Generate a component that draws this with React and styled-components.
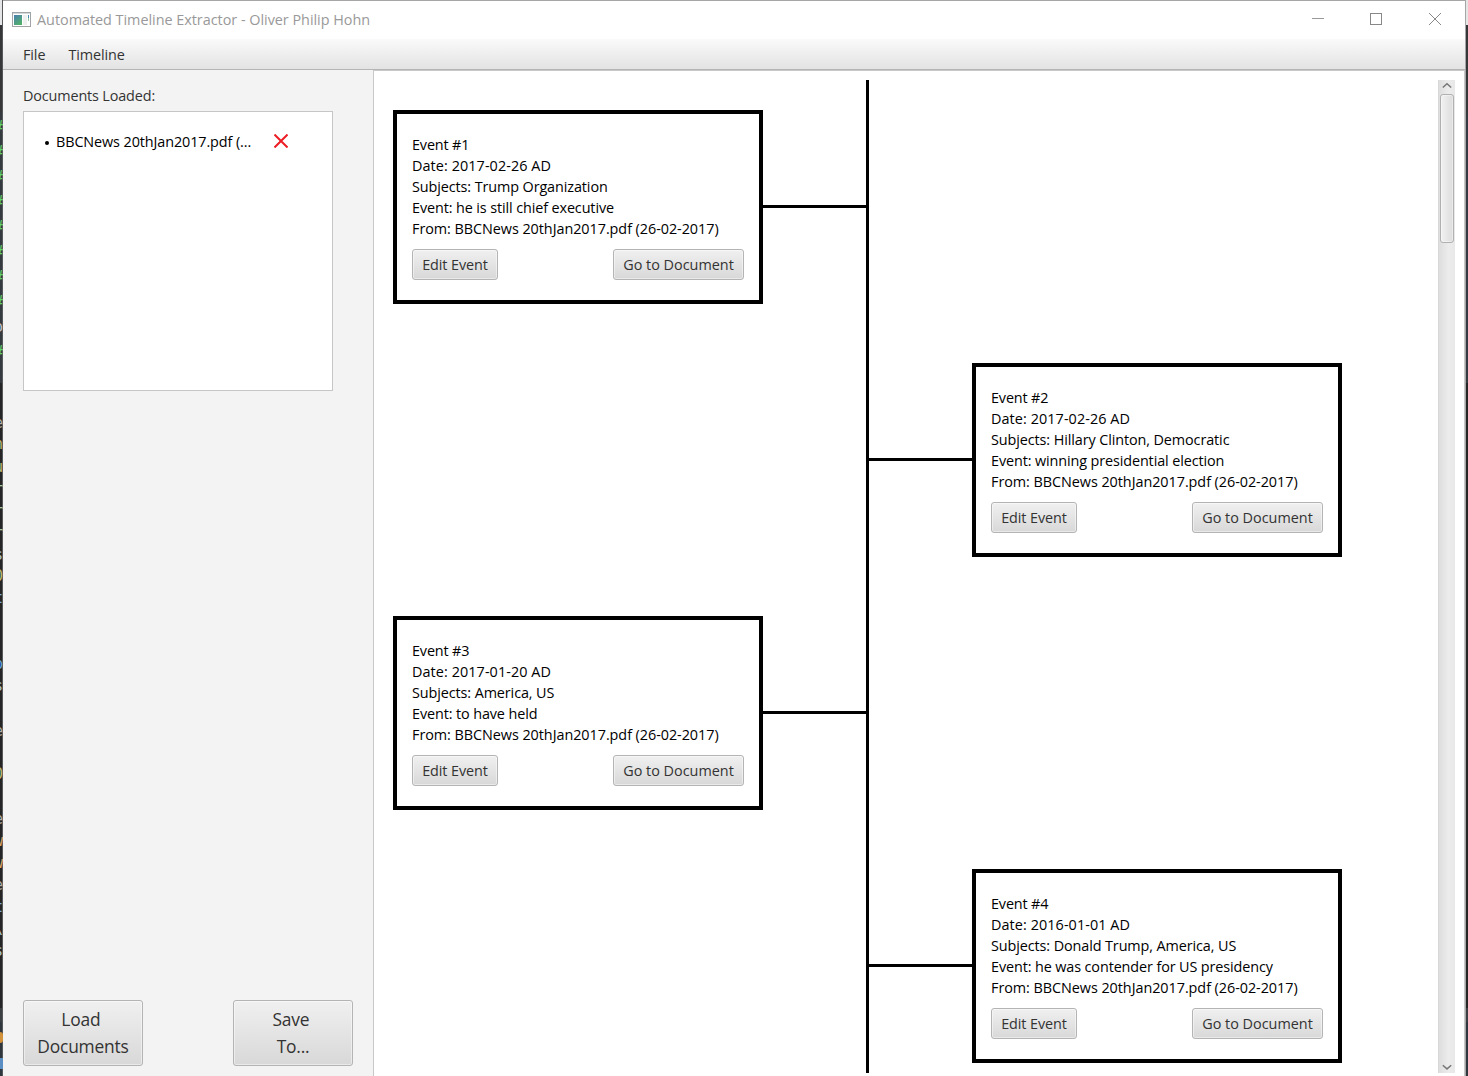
import React from "react";
import styled, { createGlobalStyle, css } from "styled-components";

const GlobalStyle = createGlobalStyle`
  * { box-sizing: border-box; }
  body {
    margin: 0;
    overflow: hidden;
    font-family: "Open Sans", "Noto Sans", sans-serif;
    font-size: 14.4px;
    color: #000;
  }
  button { font: inherit; }
`;

const Desktop = styled.div`
  display: flex;
  width: 1468px;
  height: 1076px;
  overflow: hidden;
`;

const EditorStrip = styled.div`
  flex: none;
  display: flex;
  flex-direction: column;
  width: ${(p) => p.$width}px;
  height: 100%;
  overflow: hidden;
  background: linear-gradient(
    #e6e6e6 0 25px,
    #353739 25px 113px,
    #343a40 113px 383px,
    #252525 383px 1008px,
    #3c3f41 1008px 1022px,
    #2f363d 1022px
  );
  box-shadow: ${(p) => (p.$edge ? "inset -1px 0 #55585a" : "none")};
`;

const CodeLine = styled.div`
  flex: none;
  display: flex;
  justify-content: flex-end;
  height: 18px;
  margin-top: ${(p) => p.$gap}px;
  overflow: hidden;
  font: 15px/18px "DejaVu Sans Mono", monospace;
  color: ${(p) => p.$color};
`;

const CodeMark = styled.div`
  flex: none;
  height: ${(p) => p.$height}px;
  margin-top: ${(p) => p.$gap}px;
  border-radius: ${(p) => (p.$round ? "0 5px 5px 0" : "0")};
  background: ${(p) => p.$color};
`;

const Window = styled.div`
  flex: none;
  display: flex;
  flex-direction: column;
  width: 1463px;
  height: 100%;
  border-top: 1px solid #a6a6a6;
  border-right: 1px solid #a6a6a6;
  background: #fff;
`;

const TitleBar = styled.header`
  flex: none;
  display: flex;
  align-items: center;
  height: 38px;
  padding-left: 9px;
  background: #fff;
`;

const Title = styled.h1`
  flex: 1;
  margin: 0 0 0 6px;
  font-weight: 400;
  font-size: 14.4px;
  line-height: 20px;
  letter-spacing: -0.02px;
  color: #999;
`;

const WindowControls = styled.div`
  display: flex;
  align-items: center;
  gap: 44px;
  padding: 0 22px 2px 0;

  svg { display: block; }
`;

const MenuBar = styled.nav`
  flex: none;
  display: flex;
  align-items: center;
  gap: 23px;
  height: 31px;
  padding: 2px 0 0 20px;
  border-bottom: 1px solid #b5b5b5;
  background: linear-gradient(#fafafa, #e3e3e3);
`;

const MenuItem = styled.span`
  line-height: 20px;
  letter-spacing: -0.1px;
  color: #333;
`;

const Body = styled.div`
  flex: 1;
  display: flex;
  min-height: 0;
`;

const Sidebar = styled.aside`
  flex: none;
  display: flex;
  flex-direction: column;
  width: 370px;
  padding: 16px 20px 10px;
  background: #f3f3f3;
`;

const SidebarLabel = styled.div`
  height: 25px;
  line-height: 20px;
  letter-spacing: -0.14px;
  color: #333;
`;

const DocumentList = styled.ul`
  width: 310px;
  height: 280px;
  margin: 0;
  padding: 20px;
  list-style: none;
  border: 1px solid #c6c6c6;
  background: #fff;
`;

const DocumentRow = styled.li`
  display: flex;
  align-items: center;
  height: 20px;

  svg { margin-bottom: 2px; }
`;

const Bullet = styled.span`
  width: 4px;
  height: 4px;
  margin: 2px 7px 0 1px;
  border-radius: 50%;
  background: #000;
`;

const DocumentName = styled.span`
  width: 218px;
  line-height: 20px;
  letter-spacing: -0.1px;
`;

const SidebarActions = styled.div`
  display: flex;
  justify-content: space-between;
  margin-top: auto;
`;

const raised = css`
  border: 1px solid #b4b4b4;
  border-radius: 3px;
  background: linear-gradient(#f0f0f0, #d8d8d8);
  box-shadow: inset 0 0 0 1px rgba(255, 255, 255, 0.45);
  color: #333;
`;

const LargeButton = styled.button`
  ${raised}
  width: 120px;
  height: 66px;
  padding: 0;
  font-size: 17.4px;
  line-height: 27px;
  letter-spacing: -0.2px;
  white-space: pre;
`;

const Pane = styled.main`
  flex: 1;
  display: flex;
  min-width: 0;
  padding: 9px 9px 3px 19px;
  border: 1px solid #c8c8c8;
  border-bottom: 0;
  background: #fff;
`;

const Timeline = styled.div`
  flex: none;
  display: grid;
  grid-template-columns: 473px 3px 473px;
  width: 1045px;
  overflow: hidden;
`;

const Lane = styled.div`
  display: flex;
  flex-direction: column;
  gap: 312px;
  padding-top: ${(p) => p.$offset}px;
`;

const Spine = styled.div`
  background: #000;
`;

const EventRow = styled.div`
  display: flex;
  flex-direction: ${(p) => (p.$right ? "row-reverse" : "row")};
  align-items: center;
`;

const Connector = styled.div`
  flex: 1;
  height: 3px;
  margin-bottom: 1px;
  background: #000;
`;

const Card = styled.article`
  flex: none;
  width: 370px;
  height: 194px;
  padding: 20px 15px 0;
  border: 4px solid #000;
`;

const CardLine = styled.div`
  height: 21px;
  line-height: 21px;
  letter-spacing: ${(p) => p.$track}px;
  white-space: nowrap;
`;

const CardActions = styled.div`
  display: flex;
  justify-content: space-between;
  margin-top: 10px;
`;

const SmallButton = styled.button`
  ${raised}
  width: ${(p) => p.$width}px;
  height: 31px;
  padding: 0;
  letter-spacing: ${(p) => p.$track}px;
  white-space: nowrap;
`;

const ScrollBar = styled.div`
  flex: none;
  display: flex;
  flex-direction: column;
  align-items: center;
  width: 17px;
  border-left: 1px solid #d8d8d8;
  background: linear-gradient(90deg, #dedede, #ececec 60%, #e8e8e8);
`;

const ScrollThumb = styled.div`
  width: 14px;
  height: 149px;
  margin: 4px 0 auto;
  border: 1px solid #b0b0b0;
  border-radius: 3px;
  background: linear-gradient(90deg, #f2f2f2, #dcdcdc);
  box-shadow: inset 0 0 0 1px rgba(255, 255, 255, 0.4);
`;

const ScrollArrow = styled.svg`
  flex: none;
  display: block;
  margin: ${(p) => p.$margin};
`;

const hash = (gap) => ["#", gap, "#63cf68"];
const code = [
  hash(118), hash(7), hash(7), hash(7), hash(7), hash(7), hash(7), hash(7),
  ["o", 7, "#c0c0ca"],
  hash(7),
  ["e", 53, "#b0aea8"], ["h", 3, "#bcb978"], ["u", 5, "#bcb978"],
  ["r", 4, "#a5c6a5"], ["r", 4, "#a5c6a5"], ["r", 4, "#a5c6a5"],
  ["s", 4, "#abc4d0"], ["0", 3, "#bcb978"], ["t", 4, "#76a8dc"],
  ["p", 48, "#68a4e0"], ["s", 4, "#abc4d0"], ["e", 27, "#b0aea8"],
  ["0", 25, "#bcb978"], ["e", 27, "#b0aea8"], ["w", 4, "#d8a868"],
  ["w", 4, "#d8a868"], ["e", 4, "#b0aea8"], ["t", 4, "#76a8dc"],
  ["\\", 4, "#abc4d0"], ["s", 4, "#abc4d0"], [":", 4, "#6e9cc0"],
];

const source = "From: BBCNews 20thJan2017.pdf (26-02-2017)";
const leftEvents = [
  ["Event #1", "Date: 2017-02-26 AD", "Subjects: Trump Organization", "Event: he is still chief executive", source],
  ["Event #3", "Date: 2017-01-20 AD", "Subjects: America, US", "Event: to have held", source],
];
const rightEvents = [
  ["Event #2", "Date: 2017-02-26 AD", "Subjects: Hillary Clinton, Democratic", "Event: winning presidential election", source],
  ["Event #4", "Date: 2016-01-01 AD", "Subjects: Donald Trump, America, US", "Event: he was contender for US presidency", source],
];

const lineTracks = [-0.15, 0.08, -0.1, -0.11, -0.05];

function EventCard({ lines, right }) {
  return (
    <EventRow $right={right}>
      <Card>
        {lines.map((line, i) => (
          <CardLine key={line} $track={lineTracks[i]}>{line}</CardLine>
        ))}
        <CardActions>
          <SmallButton $width={86} $track={-0.08}>Edit Event</SmallButton>
          <SmallButton $width={131} $track={0}>Go to Document</SmallButton>
        </CardActions>
      </Card>
      <Connector />
    </EventRow>
  );
}

function AppIcon() {
  return (
    <svg width="19" height="16" viewBox="0 0 19 16" shapeRendering="crispEdges">
      <defs>
        <linearGradient id="appIconFill" x1="0" y1="0" x2="0.6" y2="1">
          <stop offset="0" stopColor="#4a7fb0" />
          <stop offset="1" stopColor="#4fae6c" />
        </linearGradient>
      </defs>
      <rect x="0.5" y="0.5" width="18" height="14" fill="#fff" stroke="#a0a4a6" />
      <rect x="1" y="1" width="17" height="1" fill="#d5d8da" />
      <rect x="2" y="3" width="8" height="10" fill="url(#appIconFill)" />
      <rect x="11" y="3" width="4" height="10" fill="#eef0f0" />
      <rect x="16" y="3" width="1" height="3" fill="#4a86b8" />
      <rect x="16" y="6" width="1" height="3" fill="#8fc7a0" />
    </svg>
  );
}

export default function App() {
  return (
    <>
      <GlobalStyle />
      <Desktop>
        <EditorStrip $width={3} $edge>
          {code.map(([glyph, gap, color], i) => (
            <CodeLine key={i} $gap={gap} $color={color}>{glyph}</CodeLine>
          ))}
          <CodeMark $gap={50} $height={11} $color="#d2923c" $round />
          <CodeMark $gap={15} $height={11} $color="#5b8fc4" />
        </EditorStrip>
        <Window>
          <TitleBar>
            <AppIcon />
            <Title>Automated Timeline Extractor - Oliver Philip Hohn</Title>
            <WindowControls>
              <svg width="14" height="14" viewBox="0 0 14 14" stroke="#999" fill="none">
                <path d="M1 6.5H13" />
              </svg>
              <svg width="14" height="14" viewBox="0 0 14 14" stroke="#888" fill="none">
                <rect x="1.5" y="1.5" width="11" height="11" />
              </svg>
              <svg width="16" height="14" viewBox="0 0 16 14" stroke="#888" fill="none">
                <path d="M2 1L14 13M14 1L2 13" />
              </svg>
            </WindowControls>
          </TitleBar>
          <MenuBar>
            <MenuItem>File</MenuItem>
            <MenuItem>Timeline</MenuItem>
          </MenuBar>
          <Body>
            <Sidebar>
              <SidebarLabel>Documents Loaded:</SidebarLabel>
              <DocumentList>
                <DocumentRow>
                  <Bullet />
                  <DocumentName>BBCNews 20thJan2017.pdf (...</DocumentName>
                  <svg width="14" height="14" viewBox="0 0 14 14" stroke="#ed1c24" strokeWidth="2" fill="none">
                    <path d="M0.5 0.5L13.5 13.5M13.5 0.5L0.5 13.5" />
                  </svg>
                </DocumentRow>
              </DocumentList>
              <SidebarActions>
                <LargeButton>{"Load\u00a0\nDocuments"}</LargeButton>
                <LargeButton>{"Save\u00a0\nTo..."}</LargeButton>
              </SidebarActions>
            </Sidebar>
            <Pane>
              <Timeline>
                <Lane $offset={30}>
                  {leftEvents.map((lines) => <EventCard key={lines[0]} lines={lines} />)}
                </Lane>
                <Spine />
                <Lane $offset={283}>
                  {rightEvents.map((lines) => <EventCard key={lines[0]} lines={lines} right />)}
                </Lane>
              </Timeline>
              <ScrollBar>
                <ScrollArrow $margin="2px 0 0" width="10" height="8" viewBox="0 0 10 8" stroke="#777" strokeWidth="1.5" fill="none">
                  <path d="M0.8 5.5L5 1.8L9.2 5.5" />
                </ScrollArrow>
                <ScrollThumb />
                <ScrollArrow $margin="0 0 2px" width="10" height="8" viewBox="0 0 10 8" stroke="#777" strokeWidth="1.5" fill="none">
                  <path d="M0.8 2.2L5 5.9L9.2 2.2" />
                </ScrollArrow>
              </ScrollBar>
            </Pane>
          </Body>
        </Window>
        <EditorStrip $width={2} />
      </Desktop>
    </>
  );
}
